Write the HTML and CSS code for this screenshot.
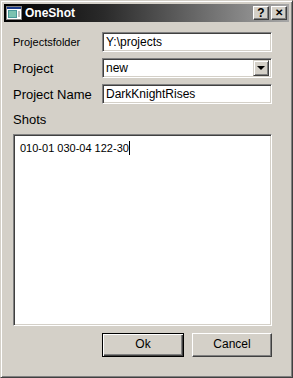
FILE: index.html
```html
<!DOCTYPE html>
<html lang="en">
<head>
    <meta charset="UTF-8">
    <title>OneShot</title>
    <link rel="stylesheet" href="styles.css">
</head>
<body>
    <div class="window">
        <div class="titlebar">
            <svg class="app-icon" width="16" height="16" viewBox="0 0 16 16">
                <rect x="0.5" y="1.5" width="15" height="13" fill="#fff" stroke="#808080"/>
                <rect x="1" y="2" width="14" height="2" fill="#1c3c8c"/>
                <rect x="2" y="5" width="9" height="8" fill="#4a9a9a"/>
                <rect x="3" y="6" width="7" height="6" fill="#7cc2b0"/>
                <rect x="12" y="6" width="2" height="6" fill="#c0c0c0"/>
            </svg>
            <span class="title">OneShot</span>
            <div class="caption-buttons">
                <span class="cap-btn">?</span>
                <span class="cap-btn cap-close">&#x2715;</span>
            </div>
        </div>
        <div class="content">
            <div class="form">
                <span class="lbl lbl-small">Projectsfolder</span>
                <div class="field">Y:\projects</div>
                <span class="lbl">Project</span>
                <div class="field combo">
                    <span class="combo-text">new</span>
                    <span class="combo-btn"><span class="arrow-down"></span></span>
                </div>
                <span class="lbl">Project Name</span>
                <div class="field">DarkKnightRises</div>
            </div>
            <div class="shots-lbl">Shots</div>
            <div class="field textarea">010-01 030-04 122-30<span class="caret"></span></div>
            <div class="buttons">
                <span class="btn btn-default">Ok</span>
                <span class="btn">Cancel</span>
            </div>
        </div>
    </div>
</body>
</html>
```
FILE: styles.css
```css
* {
    margin: 0;
    padding: 0;
    box-sizing: border-box;
}
body {
    background: #d4d0c8;
    font-family: "Liberation Sans", Arial, sans-serif;
    color: #000;
}
.window {
    width: 293px;
    height: 378px;
    background: #d4d0c8;
    border-top: 1px solid #d4d0c8;
    border-left: 1px solid #d4d0c8;
    border-right: 1px solid #404040;
    border-bottom: 1px solid #404040;
    box-shadow: inset 1px 1px 0 #fff, inset -1px -1px 0 #808080;
    padding: 3px;
    display: flex;
    flex-direction: column;
}
.titlebar {
    height: 18px;
    display: flex;
    align-items: center;
    padding: 0 2px 0 2px;
    background: linear-gradient(to right, #000 0%, #2a2a2a 35%, #a6a6a6 100%);
}
.app-icon {
    flex: none;
    margin-right: 3px;
}
.title {
    color: #fff;
    font-weight: bold;
    font-size: 12px;
    flex: 1;
}
.caption-buttons {
    display: flex;
    gap: 2px;
}
.cap-btn {
    width: 16px;
    height: 14px;
    background: #d4d0c8;
    border-top: 1px solid #fff;
    border-left: 1px solid #fff;
    border-right: 1px solid #404040;
    border-bottom: 1px solid #404040;
    box-shadow: inset -1px -1px 0 #808080;
    font-size: 12px;
    font-weight: bold;
    line-height: 12px;
    text-align: center;
}
.cap-close {
    font-size: 10px;
}
.content {
    flex: 1;
    padding: 10px 17px 0 9px;
}
.form {
    display: grid;
    grid-template-columns: 89px 1fr;
    row-gap: 6px;
    align-items: center;
}
.lbl {
    font-size: 13px;
}
.lbl-small {
    font-size: 11px;
}
.field {
    background: #fff;
    height: 20px;
    border-top: 1px solid #808080;
    border-left: 1px solid #808080;
    border-right: 1px solid #fff;
    border-bottom: 1px solid #fff;
    box-shadow: inset 1px 1px 0 #404040, inset -1px -1px 0 #d4d0c8;
    font-size: 12px;
    line-height: 18px;
    padding: 0 3px;
}
.combo {
    display: flex;
    padding-right: 2px;
}
.combo-text {
    flex: 1;
}
.combo-btn {
    width: 16px;
    height: 16px;
    margin-top: 1px;
    background: #d4d0c8;
    border-top: 1px solid #d4d0c8;
    border-left: 1px solid #d4d0c8;
    border-right: 1px solid #404040;
    border-bottom: 1px solid #404040;
    box-shadow: inset 1px 1px 0 #fff, inset -1px -1px 0 #808080;
    display: flex;
    align-items: center;
    justify-content: center;
}
.arrow-down {
    width: 0;
    height: 0;
    border-left: 4px solid transparent;
    border-right: 4px solid transparent;
    border-top: 4px solid #000;
}
.shots-lbl {
    font-size: 13px;
    margin-top: 8px;
    height: 18px;
}
.textarea {
    margin-top: 4px;
    height: 192px;
    padding: 4px 6px;
    font-size: 11px;
}
.caret {
    display: inline-block;
    width: 1px;
    height: 14px;
    background: #000;
    vertical-align: -3px;
}
.buttons {
    display: flex;
    justify-content: flex-end;
    gap: 8px;
    margin-top: 7px;
}
.btn {
    width: 80px;
    height: 24px;
    font-size: 12px;
    line-height: 20px;
    text-align: center;
    background: #d4d0c8;
    border-top: 1px solid #fff;
    border-left: 1px solid #fff;
    border-right: 1px solid #404040;
    border-bottom: 1px solid #404040;
    box-shadow: inset -1px -1px 0 #808080;
}
.btn-default {
    width: 82px;
    border: 1px solid #000;
    box-shadow: inset 1px 1px 0 #fff, inset -1px -1px 0 #404040, inset -2px -2px 0 #808080;
}
```
